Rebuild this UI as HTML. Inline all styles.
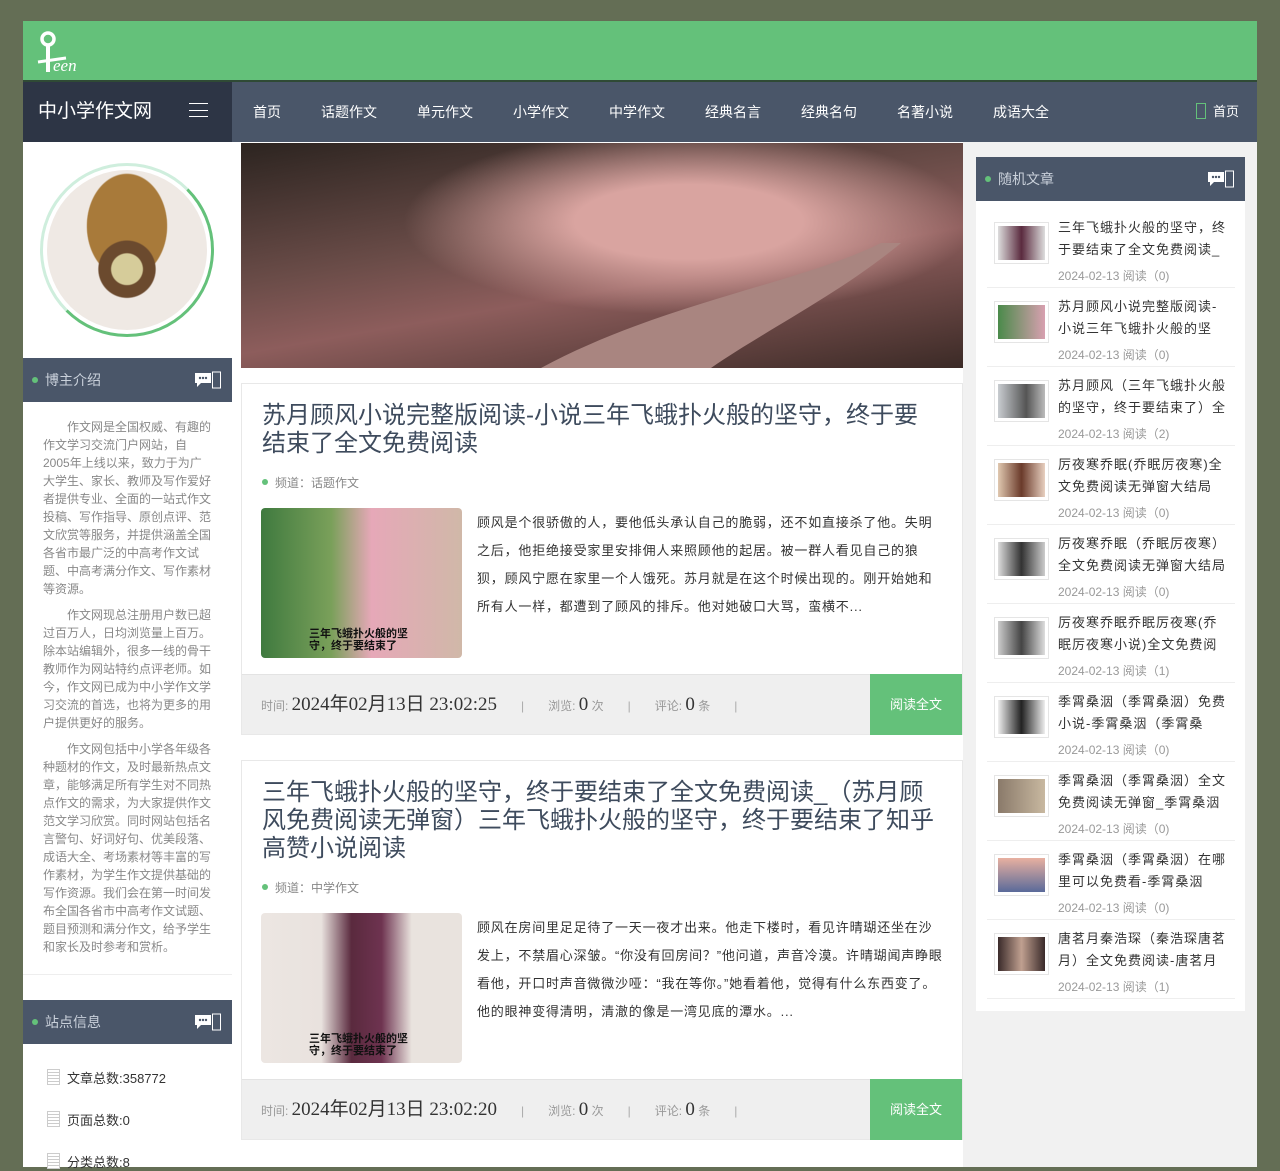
<!DOCTYPE html>
<html><head><meta charset="utf-8"><style>
*{margin:0;padding:0;box-sizing:border-box}
body{width:1280px;height:1167px;overflow:hidden;background:#646e55;font-family:"Liberation Sans","Noto Sans CJK SC",sans-serif;position:relative}
.abs{position:absolute}
.hdr{left:23px;top:21px;width:1234px;height:60px;background:#64c17a}
.line{left:23px;top:80px;width:1234px;height:2px;background:#2f4a35}
.nav{left:23px;top:82px;width:1234px;height:60px;background:#4a5669}
.brand{left:23px;top:82px;width:209px;height:60px;background:#2d3545;color:#fff;font-size:19px;line-height:60px;padding-left:15px}
.nav a{position:absolute;top:0;line-height:60px;color:#fff;font-size:14px;text-decoration:none}
.left{left:23px;top:142px;width:209px;height:1025px;background:#fff}
.right{left:963px;top:142px;width:294px;height:1025px;background:#f1f1f1}
.mid{left:232px;top:142px;width:731px;height:1025px;background:#fff}
.wh{background:#4a5669;color:#c9d0da;font-size:14px;height:44px;line-height:44px;padding-left:22px;position:relative}
.wh:before{content:"";position:absolute;left:9px;top:19px;width:6px;height:6px;border-radius:50%;background:#64c17a}
.ico{position:absolute;right:11px;top:13px;width:26px;height:18px}
.intro{color:#888;font-size:12px;line-height:18px;padding:0 20px 0 20px;width:209px}
.intro p{text-indent:2em;margin-bottom:8px}
.card{position:absolute;left:241px;width:722px;border:1px solid #e8e8e8;background:#fff}
.card h2{font-weight:normal;color:#3e4b5d;font-size:24px;line-height:28px;padding:18px 40px 0 20px}
.ch{font-size:12px;color:#888;padding-left:33px;position:relative;margin-top:16px}
.ch:before{content:"";position:absolute;left:20px;top:5px;width:6px;height:6px;border-radius:50%;background:#64c17a}
.img{position:absolute;left:19px;width:201px;height:150px;border-radius:4px}
.txt{position:absolute;left:235px;width:468px;font-size:13px;letter-spacing:0.8px;line-height:28px;color:#333}
.foot{position:absolute;left:0;width:720px;height:60px;background:#efefef;border-top:1px solid #e3e3e3;font-size:12px;color:#999;line-height:60px;padding-left:19px}
.foot b{font-family:"Liberation Serif",serif;font-weight:normal;color:#333;font-size:19px}
.foot i{font-style:normal;margin:0 24px;color:#aaa}
.rd{position:absolute;right:0;top:-1px;width:92px;height:61px;background:#64c17a;color:#fff;font-size:13px;text-align:center;line-height:61px}
.ra{position:absolute;left:976px;top:157px;width:269px;height:854px;background:#fff}
.it{position:absolute;left:11px;width:248px;height:79px;border-bottom:1px solid #eee}
.it .th{position:absolute;left:7px;top:13px;width:55px;height:42px;border:1px solid #e5e5e5;padding:3px}
.it .th div{width:100%;height:100%}
.it .t{position:absolute;left:71px;top:8px;width:172px;font-size:13px;letter-spacing:1px;line-height:22px;color:#333}
.it .d{position:absolute;left:71px;top:58px;font-size:12px;color:#999}
.si{font-size:13px;color:#333;position:absolute;left:67px}
.si:before{content:"";position:absolute;left:-20px;top:1px;width:11px;height:14px;border:1px solid #ccc;background:repeating-linear-gradient(#fff 0 2px,#ccc 2px 3px)}
</style></head><body>
<div class="abs hdr"></div>
<svg class="abs" style="left:36px;top:30px" width="54" height="44" viewBox="0 0 54 44"><circle cx="12" cy="9" r="6" fill="none" stroke="#fff" stroke-width="3.5"/><rect x="10" y="16" width="4" height="26" fill="#fff"/><path d="M2 32 L30 28" stroke="#fff" stroke-width="3"/><text x="17" y="41" fill="#fff" font-size="17" font-style="italic" font-family="Liberation Serif">een</text></svg>
<div class="abs line"></div>
<div class="abs nav">
<a style="left:230px">首页</a><a style="left:298px">话题作文</a><a style="left:394px">单元作文</a><a style="left:490px">小学作文</a><a style="left:586px">中学作文</a><a style="left:682px">经典名言</a><a style="left:778px">经典名句</a><a style="left:874px">名著小说</a><a style="left:970px">成语大全</a>
<span style="position:absolute;left:1173px;top:21px;width:10px;height:16px;border:1px solid #64c17a"></span>
<a style="left:1190px;font-size:13px">首页</a></div>
<div class="abs brand">中小学作文网<span style="position:absolute;left:166px;top:21px;width:19px;height:14px;border-top:1px solid #fff;border-bottom:1px solid #fff"></span><span style="position:absolute;left:166px;top:28px;width:19px;height:1px;background:#fff"></span></div>
<div class="abs left">
<div style="position:absolute;left:17px;top:21px;width:174px;height:174px;border-radius:50%;border:3px solid #cfeedd;border-right-color:#64c17a;border-bottom-color:#64c17a;padding:4px"><div style="width:100%;height:100%;border-radius:50%;background:radial-gradient(circle at 50% 62%,#d6cc9a 0 12%,#6b4a2e 13% 22%,transparent 23%),radial-gradient(ellipse at 50% 35%,#a87a3a 0 35%,transparent 36%),#efe9e4"></div></div>
<div class="wh" style="position:absolute;top:216px;width:209px">博主介绍<svg class="ico" viewBox="0 0 26 18"><rect x="0" y="2" width="16" height="10" fill="#fff"/><path d="M2 12 L2 16 L6 12" fill="#fff"/><circle cx="5" cy="7" r="1.2" fill="#4a5669"/><circle cx="8" cy="7" r="1.2" fill="#4a5669"/><circle cx="11" cy="7" r="1.2" fill="#4a5669"/><rect x="17.5" y="1" width="8" height="16" fill="none" stroke="#fff"/></svg></div>
<div class="intro" style="position:absolute;top:276px">
<p>作文网是全国权威、有趣的作文学习交流门户网站，自2005年上线以来，致力于为广大学生、家长、教师及写作爱好者提供专业、全面的一站式作文投稿、写作指导、原创点评、范文欣赏等服务，并提供涵盖全国各省市最广泛的中高考作文试题、中高考满分作文、写作素材等资源。</p>
<p>作文网现总注册用户数已超过百万人，日均浏览量上百万。除本站编辑外，很多一线的骨干教师作为网站特约点评老师。如今，作文网已成为中小学作文学习交流的首选，也将为更多的用户提供更好的服务。</p>
<p>作文网包括中小学各年级各种题材的作文，及时最新热点文章，能够满足所有学生对不同热点作文的需求，为大家提供作文范文学习欣赏。同时网站包括名言警句、好词好句、优美段落、成语大全、考场素材等丰富的写作素材，为学生作文提供基础的写作资源。我们会在第一时间发布全国各省市中高考作文试题、题目预测和满分作文，给予学生和家长及时参考和赏析。</p></div>
<div style="position:absolute;top:832px;left:0;width:209px;height:1px;background:#eee"></div>
<div class="wh" style="position:absolute;top:858px;width:209px">站点信息<svg class="ico" viewBox="0 0 26 18"><rect x="0" y="2" width="16" height="10" fill="#fff"/><path d="M2 12 L2 16 L6 12" fill="#fff"/><circle cx="5" cy="7" r="1.2" fill="#4a5669"/><circle cx="8" cy="7" r="1.2" fill="#4a5669"/><circle cx="11" cy="7" r="1.2" fill="#4a5669"/><rect x="17.5" y="1" width="8" height="16" fill="none" stroke="#fff"/></svg></div>
</div>
<div class="si" style="top:1068px">文章总数:358772</div>
<div class="si" style="top:1110px">页面总数:0</div>
<div class="si" style="top:1152px">分类总数:8</div>
<div class="abs mid"></div>
<div class="abs right"></div>
<div class="abs" style="left:241px;top:143px;width:722px;height:225px;background:radial-gradient(ellipse at 62% 35%,#d9a4a0 0 18%,transparent 45%),linear-gradient(170deg,#2c2420 0%,#6a4c48 40%,#8d5d5c 60%,#3b2a26 100%)"><svg width="722" height="225"><path d="M300 225 C420 160 560 140 640 100 L660 100 C600 150 520 190 470 225 Z" fill="#a98580"/></svg></div>
<div class="card" style="top:383px;height:352px">
<h2>苏月顾风小说完整版阅读-小说三年飞蛾扑火般的坚守，终于要结束了全文免费阅读</h2>
<div class="ch">频道：话题作文</div>
<div class="img" style="top:124px;background:linear-gradient(90deg,#3f7a3f 0,#7aa05a 35%,#e6a8b8 55%,#d0b8a8 100%)"><div style="position:absolute;left:48px;top:120px;font-size:11px;font-weight:bold;color:#111;line-height:12px;width:120px">三年飞蛾扑火般的坚守，终于要结束了</div></div>
<div class="txt" style="top:125px">顾风是个很骄傲的人，要他低头承认自己的脆弱，还不如直接杀了他。失明之后，他拒绝接受家里安排佣人来照顾他的起居。被一群人看见自己的狼狈，顾风宁愿在家里一个人饿死。苏月就是在这个时候出现的。刚开始她和所有人一样，都遭到了顾风的排斥。他对她破口大骂，蛮横不...</div>
<div class="foot" style="top:290px">时间: <b>2024年02月13日 23:02:25</b><i>|</i>浏览: <b>0</b> 次<i>|</i>评论: <b>0</b> 条<i>|</i><div class="rd">阅读全文</div></div>
</div>
<div class="card" style="top:760px;height:380px">
<h2 style="padding-right:28px">三年飞蛾扑火般的坚守，终于要结束了全文免费阅读_（苏月顾风免费阅读无弹窗）三年飞蛾扑火般的坚守，终于要结束了知乎高赞小说阅读</h2>
<div class="ch">频道：中学作文</div>
<div class="img" style="top:152px;background:linear-gradient(90deg,#ece6e2 0,#e9e2de 30%,#5a2a3e 45%,#6e3350 60%,#e9e3de 75%)"><div style="position:absolute;left:48px;top:120px;font-size:11px;font-weight:bold;color:#111;line-height:12px;width:120px">三年飞蛾扑火般的坚守，终于要结束了</div></div>
<div class="txt" style="top:153px">顾风在房间里足足待了一天一夜才出来。他走下楼时，看见许晴瑚还坐在沙发上，不禁眉心深皱。“你没有回房间？”他问道，声音冷漠。许晴瑚闻声睁眼看他，开口时声音微微沙哑：“我在等你。”她看着他，觉得有什么东西变了。他的眼神变得清明，清澈的像是一湾见底的潭水。...</div>
<div class="foot" style="top:318px">时间: <b>2024年02月13日 23:02:20</b><i>|</i>浏览: <b>0</b> 次<i>|</i>评论: <b>0</b> 条<i>|</i><div class="rd">阅读全文</div></div>
</div>
<div class="ra">
<div class="wh">随机文章<svg class="ico" viewBox="0 0 26 18"><rect x="0" y="2" width="16" height="10" fill="#fff"/><path d="M2 12 L2 16 L6 12" fill="#fff"/><circle cx="5" cy="7" r="1.2" fill="#4a5669"/><circle cx="8" cy="7" r="1.2" fill="#4a5669"/><circle cx="11" cy="7" r="1.2" fill="#4a5669"/><rect x="17.5" y="1" width="8" height="16" fill="none" stroke="#fff"/></svg></div>
<div class="it" style="top:52px"><div class="th"><div style="background:linear-gradient(90deg,#ddd,#5a2a3e 50%,#ddd)"></div></div><div class="t">三年飞蛾扑火般的坚守，终于要结束了全文免费阅读_</div><div class="d">2024-02-13 阅读（0)</div></div>
<div class="it" style="top:131px"><div class="th"><div style="background:linear-gradient(90deg,#4a8a4a,#d8a0b0)"></div></div><div class="t">苏月顾风小说完整版阅读-小说三年飞蛾扑火般的坚</div><div class="d">2024-02-13 阅读（0)</div></div>
<div class="it" style="top:210px"><div class="th"><div style="background:linear-gradient(90deg,#c8ccd0,#555 60%,#bbb)"></div></div><div class="t">苏月顾风（三年飞蛾扑火般的坚守，终于要结束了）全</div><div class="d">2024-02-13 阅读（2)</div></div>
<div class="it" style="top:289px"><div class="th"><div style="background:linear-gradient(90deg,#e0c8b0,#6a3a2a 50%,#e8d0c0)"></div></div><div class="t">厉夜寒乔眠(乔眠厉夜寒)全文免费阅读无弹窗大结局</div><div class="d">2024-02-13 阅读（0)</div></div>
<div class="it" style="top:368px"><div class="th"><div style="background:linear-gradient(90deg,#ddd,#333 50%,#ccc)"></div></div><div class="t">厉夜寒乔眠（乔眠厉夜寒）全文免费阅读无弹窗大结局</div><div class="d">2024-02-13 阅读（0)</div></div>
<div class="it" style="top:447px"><div class="th"><div style="background:linear-gradient(90deg,#ccc,#444 50%,#ddd)"></div></div><div class="t">厉夜寒乔眠乔眠厉夜寒(乔眠厉夜寒小说)全文免费阅</div><div class="d">2024-02-13 阅读（1)</div></div>
<div class="it" style="top:526px"><div class="th"><div style="background:linear-gradient(90deg,#eee,#222 50%,#eee)"></div></div><div class="t">季霄桑洇（季霄桑洇）免费小说-季霄桑洇（季霄桑</div><div class="d">2024-02-13 阅读（0)</div></div>
<div class="it" style="top:605px"><div class="th"><div style="background:linear-gradient(90deg,#8a7a6a,#c8b8a0)"></div></div><div class="t">季霄桑洇（季霄桑洇）全文免费阅读无弹窗_季霄桑洇</div><div class="d">2024-02-13 阅读（0)</div></div>
<div class="it" style="top:684px"><div class="th"><div style="background:linear-gradient(180deg,#e8b0a0,#5a6a9a)"></div></div><div class="t">季霄桑洇（季霄桑洇）在哪里可以免费看-季霄桑洇</div><div class="d">2024-02-13 阅读（0)</div></div>
<div class="it" style="top:763px"><div class="th"><div style="background:linear-gradient(90deg,#3a2a2a,#c0a090 50%,#3a2a2a)"></div></div><div class="t">唐茗月秦浩琛（秦浩琛唐茗月）全文免费阅读-唐茗月</div><div class="d">2024-02-13 阅读（1)</div></div>
</div>
</body></html>
